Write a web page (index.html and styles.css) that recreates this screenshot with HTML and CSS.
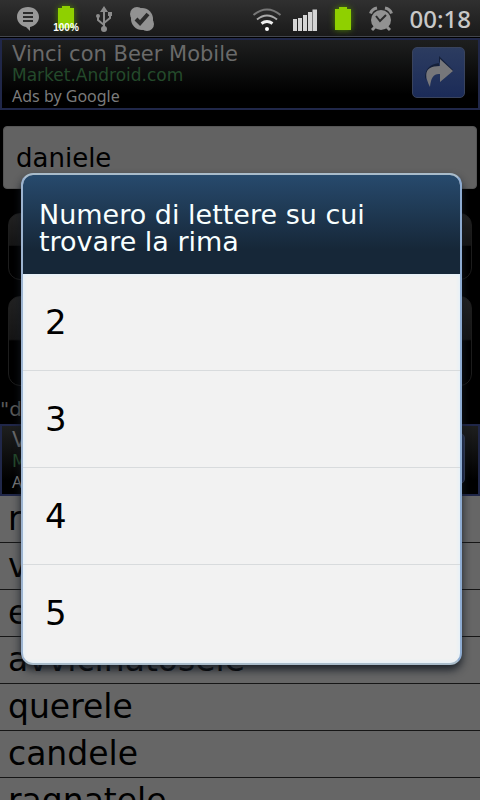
FILE: index.html
```html
<!DOCTYPE html>
<html lang="it">
<head>
<meta charset="utf-8">
<meta name="viewport" content="width=device-width, initial-scale=1">
<title>Rime</title>
<link rel="stylesheet" href="styles.css">
</head>
<body>
<div class="screen">
  <header class="status">
    <div class="status-group notices">
      <svg width="24" height="28" viewBox="0 0 24 28"><path fill="#989898" d="M12 2C5.500 2 1 6 1 12c0 5 4 9 9 10l4 4v-4c5-1 9-5 9-10 0-6-5-10-11-10z"/><path stroke="#2b2b2b" stroke-width="2" d="M7 8h10M7 12h10M7 16h10"/></svg>
      <div class="charge">
        <svg class="glow" width="20" height="26" viewBox="0 0 20 26"><path fill="#8fd000" d="M2 4h4V2h8v2h4v20H2z"/></svg>
        <span class="charge-label">100%</span>
      </div>
      <svg width="18" height="28" viewBox="0 0 18 28"><g fill="none" stroke="#8c8c8c" stroke-width="2"><path d="M9 5v18M3 11v4l6 5M15 10v3l-6 5"/></g><path fill="#8c8c8c" d="M9 1l4 6H5zM13 7h4v4h-4z"/><circle cx="3" cy="11" r="2" fill="#8c8c8c"/><circle cx="9" cy="24" r="3" fill="#8c8c8c"/></svg>
      <svg width="26" height="28" viewBox="0 0 26 28"><g fill="#929292"><circle cx="13" cy="14" r="11"/><circle cx="8" cy="9" r="7"/><circle cx="18" cy="19" r="7"/></g><path fill="none" stroke="#2b2b2b" stroke-width="4" d="M7 14l4 4 8-9"/></svg>
    </div>
    <div class="status-group signals">
      <svg width="30" height="28" viewBox="0 0 30 28"><g fill="none" stroke-width="2"><path stroke="#777" d="M1.500 10Q15-1 28.500 10"/><path stroke="#aaa" d="M5 14.500q10-8 20 0"/><path stroke="#eee" stroke-width="3" d="M9.500 18.500q5.500-4 11 0"/></g><circle cx="15" cy="24" r="2" fill="#fff"/></svg>
      <svg width="24" height="28" viewBox="0 0 24 28"><path fill="#d4d4d4" d="M0 14h4v12H0zM5 13h4v13H5zM10 10h4v16h-4zM15 7h4v19h-4zM19.500 4.500H24V26h-4.500z"/></svg>
      <svg class="glow" width="18" height="28" viewBox="0 0 18 28"><path fill="#8fd000" d="M1 4h4V2h8v2h4v21H1z"/></svg>
      <svg width="24" height="28" viewBox="0 0 24 28"><g fill="none" stroke="#929292" stroke-width="3"><path d="M1.500 8.500Q3 4 8 3M22.500 8.500Q21 4 16 3M6 22l-3 3M18 22l3 3"/></g><circle cx="12" cy="15" r="10" fill="#929292"/><path fill="none" stroke="#2b2b2b" stroke-width="2" d="M7 11l4 5 6-6"/></svg>
      <time class="clock">00:18</time>
    </div>
  </header>

  <div class="app">
    <main class="page">
      <section class="ad">
        <div class="ad-text">
          <div class="ad-title">Vinci con Beer Mobile</div>
          <div class="ad-site">Market.Android.com</div>
          <div class="ad-by">Ads by Google</div>
        </div>
        <a class="ad-link" href="#" aria-label="Apri"><svg width="30" height="34" viewBox="0 0 30 34"><path fill="#15203a" d="M15 0l14 14-2 3L15 6v4Q4 12 1 24 0 9 15 7z"/><path fill="#77777a" d="M16 3l13 12-13 11v-8Q7 17 6 31-5 10 16 10z"/></svg></a>
      </section>
      <input class="word" type="text" value="daniele" aria-label="Parola">
      <button class="action" type="button" aria-label="Trova"></button>
      <button class="action tall" type="button" aria-label="Lettere"></button>
      <p class="summary">"d</p>
      <section class="ad">
        <div class="ad-text">
          <div class="ad-title">V</div>
          <div class="ad-site">M</div>
          <div class="ad-by">A</div>
        </div>
        <a class="ad-link" href="#" aria-label="Apri"></a>
      </section>
      <ul class="rhymes">
        <li>r</li>
        <li>v</li>
        <li>e</li>
        <li>avvicinatosele</li>
        <li>querele</li>
        <li>candele</li>
        <li>ragnatele</li>
      </ul>
    </main>
    <div class="overlay">
      <div class="dialog" role="dialog" aria-labelledby="dialog-title">
        <h1 class="dialog-title" id="dialog-title">Numero di lettere su cui trovare la rima</h1>
        <div class="options">
          <button class="option" type="button">2</button>
          <button class="option" type="button">3</button>
          <button class="option" type="button">4</button>
          <button class="option" type="button">5</button>
        </div>
      </div>
    </div>
  </div>
</div>
</body>
</html>
```
FILE: styles.css
```css
* { box-sizing: border-box; }

body {
  margin: 0;
  background: #000;
  font-family: "DejaVu Sans", Verdana, sans-serif;
}

.screen {
  display: flex;
  flex-direction: column;
  height: 100vh;
  overflow: hidden;
}

/* Status bar */
.status {
  flex: none;
  display: flex;
  justify-content: space-between;
  align-items: center;
  height: 38px;
  padding: 0 9px 0 16px;
  background: linear-gradient(#303030, #191919);
  border-bottom: 1px solid #000;
  box-shadow: inset 0 -1px #42454c;
}

.status-group { display: flex; align-items: center; }
.status svg { display: block; }
.notices { gap: 16px; }
.signals { gap: 17px; }
.signals svg:first-child { margin-right: -6px; }
.glow { filter: drop-shadow(0 0 3px #4f8500); }

.charge {
  display: flex;
  flex-direction: column;
  align-items: center;
  width: 26px;
  margin-left: -3px;
}

.charge-label {
  margin-top: -7px;
  color: #fff;
  font: bold 10px/10px "Liberation Sans", Arial, sans-serif;
  position: relative;
}

.clock {
  color: #c8c8c8;
  font: 500 24px/36px "Noto Sans", sans-serif;
}

/* Page behind the dialog */
.app {
  position: relative;
  flex: 1;
  min-height: 0;
  overflow: hidden;
}

.page { display: flex; flex-direction: column; }

.ad {
  display: flex;
  justify-content: space-between;
  align-items: center;
  height: 72px;
  padding: 0 13px 3px 10px;
  border: 2px solid #202749;
  background: linear-gradient(#1e1f1f, #000 80%);
}

.ad-title {
  padding-top: 4px;
  color: #6a6a6a;
  font-size: 21px;
  line-height: 24px;
}

.ad-site { color: #244a2b; font-size: 17px; line-height: 19px; }
.ad-by { color: #7b7b7b; font: 16px/22px "Noto Sans", sans-serif; }

.ad-link {
  display: flex;
  align-items: center;
  justify-content: center;
  width: 53px;
  height: 51px;
  border: 1px solid #39435d;
  border-radius: 5px;
  background: linear-gradient(#2c3c60, #1b2b58);
}

.word {
  height: 63px;
  margin: 16px 3px 24px;
  padding: 0 12px;
  border: 1px solid #555;
  border-radius: 4px;
  background: #626262;
  color: #000;
  font: 26px "DejaVu Sans", Verdana, sans-serif;
}

.action {
  height: 67px;
  margin: 0 8px 16px;
  border: 1px solid #1d1d1d;
  border-radius: 12px;
  background: linear-gradient(#222, #151515 48%, #000 50%);
}

.action.tall { height: 90px; margin-bottom: 11px; }

.summary {
  margin: 0;
  padding-bottom: 3px;
  color: #5a5a5a;
  font-size: 20px;
  line-height: 24px;
}

.rhymes {
  margin: 0;
  padding: 0;
  list-style: none;
  background: #666;
  color: #000;
  font-size: 33px;
  line-height: 46px;
}

.rhymes li {
  padding: 0 8px;
  border-bottom: 1px solid #161616;
}

/* Dialog */
.overlay {
  position: absolute;
  inset: 0;
  display: flex;
  align-items: center;
  padding: 0 18px 0 21px;
}

.dialog {
  flex: 1;
  overflow: hidden;
  border: 2px solid #a9bccb;
  border-right-color: #8eacd2;
  border-left-color: #9db4d0;
  border-radius: 12px;
  background: #f2f2f2;
  box-shadow: 0 5px 8px rgba(20, 27, 35, 0.9);
}

.dialog-title {
  margin: 0;
  padding: 26px 16px 19px;
  background: linear-gradient(#274a6d, #162738 75%);
  color: #f8ffff;
  font-size: 27px;
  font-weight: 400;
  line-height: 27px;
}

.options { padding-bottom: 1px; box-shadow: inset 0 0 4px #d9efff; }

.option {
  display: block;
  width: 100%;
  height: 97px;
  padding: 0 22px;
  border: 0;
  border-bottom: 1px solid #d8dbdd;
  background: none;
  color: #000;
  font: 34px "DejaVu Sans", Verdana, sans-serif;
  text-align: left;
}

.option:last-child { border-bottom-color: transparent; }
```
